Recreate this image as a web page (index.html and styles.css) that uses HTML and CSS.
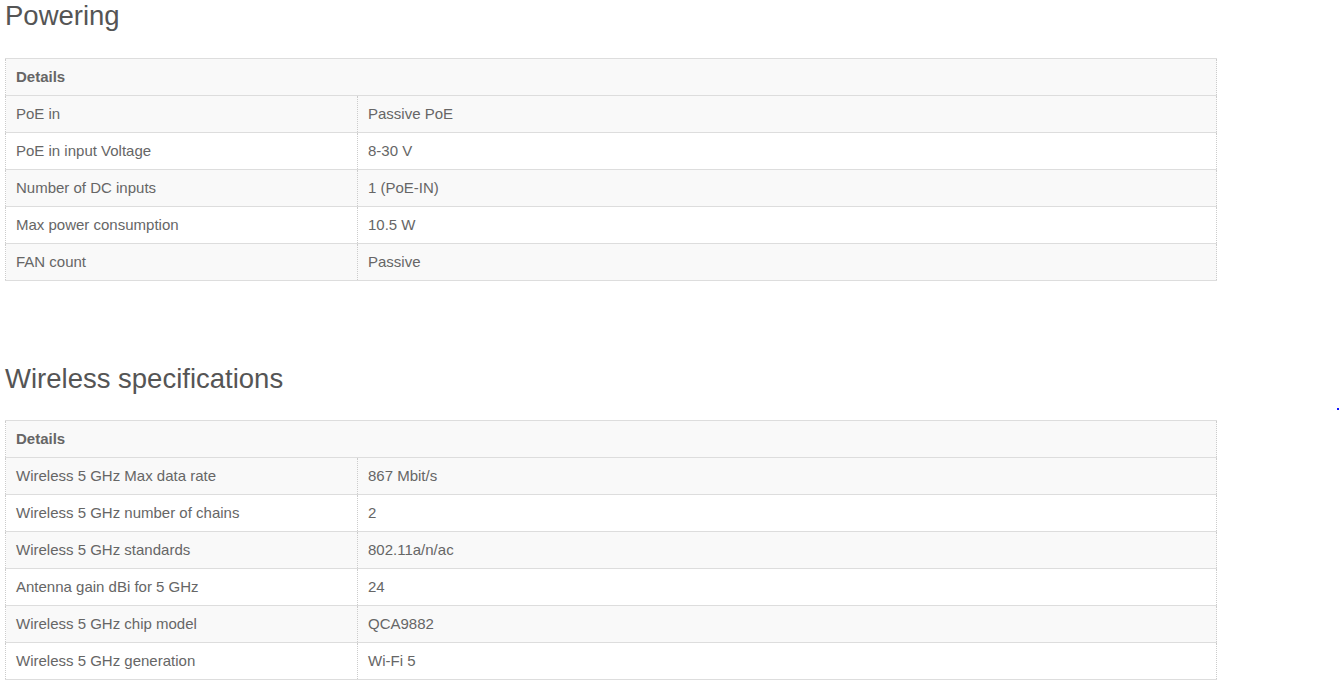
FILE: index.html
```html
<!DOCTYPE html>
<html lang="en">
<head>
<meta charset="utf-8">
<title>Specifications</title>
<link rel="stylesheet" href="styles.css">
</head>
<body>
<div class="page">
  <section class="spec first">
    <h2 class="spec-title">Powering</h2>
    <table class="spec-table">
      <colgroup><col class="col-name"><col class="col-value"></colgroup>
      <thead>
        <tr><th colspan="2">Details</th></tr>
      </thead>
      <tbody>
        <tr><td>PoE in</td><td>Passive PoE</td></tr>
        <tr><td>PoE in input Voltage</td><td>8-30 V</td></tr>
        <tr><td>Number of DC inputs</td><td>1 (PoE-IN)</td></tr>
        <tr><td>Max power consumption</td><td>10.5 W</td></tr>
        <tr><td>FAN count</td><td>Passive</td></tr>
      </tbody>
    </table>
  </section>
  <section class="spec second">
    <h2 class="spec-title">Wireless specifications</h2>
    <table class="spec-table">
      <colgroup><col class="col-name"><col class="col-value"></colgroup>
      <thead>
        <tr><th colspan="2">Details</th></tr>
      </thead>
      <tbody>
        <tr><td>Wireless 5 GHz Max data rate</td><td>867 Mbit/s</td></tr>
        <tr><td>Wireless 5 GHz number of chains</td><td>2</td></tr>
        <tr><td>Wireless 5 GHz standards</td><td>802.11a/n/ac</td></tr>
        <tr><td>Antenna gain dBi for 5 GHz</td><td>24</td></tr>
        <tr><td>Wireless 5 GHz chip model</td><td>QCA9882</td></tr>
        <tr><td>Wireless 5 GHz generation</td><td>Wi-Fi 5</td></tr>
      </tbody>
    </table>
  </section>
</div>
<span class="edge-mark"></span>
</body>
</html>
```

FILE: styles.css
```css
html, body {
  margin: 0;
  padding: 0;
  background: #fff;
}
body {
  font-family: "Liberation Sans", Arial, sans-serif;
  color: #666;
  font-size: 15px;
}
.page {
  padding: 0 0 0 5px;
}
.spec-title {
  margin: 0;
  font-size: 27.5px;
  line-height: 32px;
  font-weight: 400;
  color: #555;
}
.first .spec-title {
  margin-bottom: 26px;
}
.second {
  margin-top: 82px;
}
.second .spec-title {
  margin-bottom: 25px;
}
.spec-table {
  width: 1212px;
  border-collapse: collapse;
  table-layout: fixed;
}
.col-name {
  width: 352px;
}
.spec-table th,
.spec-table td {
  text-align: left;
  padding: 8px 10px;
  line-height: 20px;
  height: 20px;
  border-top: 1px solid #ddd;
  border-bottom: 1px solid #ddd;
  border-left: 1px dotted #ccc;
  border-right: 1px dotted #ccc;
  vertical-align: top;
}
.spec-table th {
  font-weight: 700;
  background: #f9f9f9;
  color: #666;
}
.spec-table tbody tr:nth-child(odd) td {
  background: #f9f9f9;
}
.edge-mark {
  position: absolute;
  left: 1337px;
  top: 408px;
  width: 2px;
  height: 2px;
  background: #1010ff;
}
```
